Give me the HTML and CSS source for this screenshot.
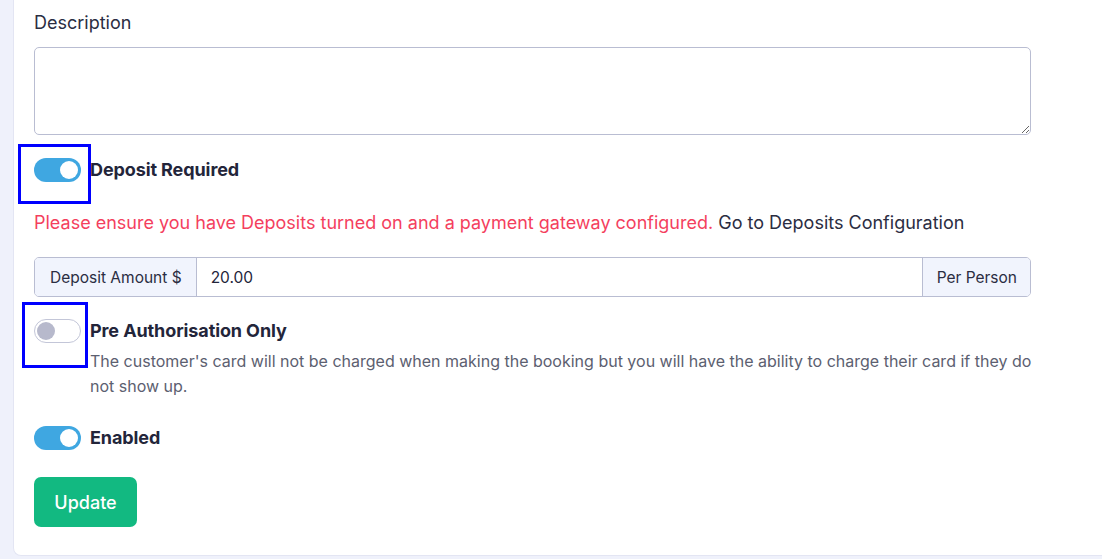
FILE: index.html
```html
<!DOCTYPE html>
<html>
<head>
<meta charset="utf-8">
<link rel="stylesheet" href="styles.css">
</head>
<body>
<div class="page">
  <div class="card">
    <label class="field-label">Description</label>
    <textarea class="textarea"></textarea>

    <div class="switch-row first">
      <span class="switch on"><span class="knob"></span></span>
      <span class="switch-label">Deposit Required</span>
      <span class="focus-box fb1"></span>
    </div>

    <p class="warning"><span class="red">Please ensure you have Deposits turned on and a payment gateway configured.</span> <a class="link">Go to Deposits Configuration</a></p>

    <div class="input-group">
      <span class="addon left">Deposit Amount $</span>
      <span class="input">20.00</span>
      <span class="addon right">Per Person</span>
    </div>

    <div class="switch-row second">
      <span class="switch off"><span class="knob"></span></span>
      <div class="switch-text">
        <span class="switch-label">Pre Authorisation Only</span>
        <p class="help">The customer's card will not be charged when making the booking but you will have the ability to charge their card if they do not show up.</p>
      </div>
      <span class="focus-box fb2"></span>
    </div>

    <div class="switch-row third">
      <span class="switch on"><span class="knob"></span></span>
      <span class="switch-label">Enabled</span>
    </div>

    <button class="btn">Update</button>
  </div>
</div>
</body>
</html>
```

FILE: styles.css
```css
* { box-sizing: border-box; }
html, body { margin: 0; padding: 0; }
body {
  background: #eff1fb;
  font-family: Inter, "Noto Sans", sans-serif;
  color: #23253a;
  width: 1102px;
  height: 559px;
  overflow: hidden;
}
.page {
  padding-left: 13px;
}
.card {
  background: #fff;
  border-left: 1px solid #e3e5f3;
  border-bottom: 1px solid #e3e5f3;
  border-bottom-left-radius: 8px;
  height: 556px;
  padding: 12px 71px 0 20px;
}
.field-label {
  display: block;
  font-size: 18px;
  line-height: 22px;
  color: #2b2d42;
}
.textarea {
  display: block;
  width: 997px;
  height: 88px;
  margin-top: 13px;
  border: 1px solid #b9bdd2;
  border-radius: 5px;
  resize: vertical;
  font: inherit;
}
.switch-row {
  position: relative;
  display: flex;
  align-items: flex-start;
}
.switch-row.first { margin-top: 23px; }
.switch-row.second { margin-top: 22px; }
.switch-row.third { margin-top: 27px; }
.switch {
  position: relative;
  flex: none;
  width: 47px;
  height: 24px;
  border-radius: 12px;
  margin-right: 9px;
}
.switch.on { background: #3fa7e1; }
.switch.off { background: #fff; border: 1px solid #c3c6d8; }
.knob {
  position: absolute;
  top: 3px;
  width: 18px;
  height: 18px;
  border-radius: 50%;
}
.switch.on .knob { right: 3px; background: #fff; }
.switch.off .knob { left: 2px; top: 2px; background: #b7b9cc; }
.switch-label {
  font-size: 18px;
  font-weight: 700;
  letter-spacing: -0.1px;
  line-height: 24px;
  color: #23253a;
}
.switch-text { display: flex; flex-direction: column; }
.help {
  margin: 6px 0 0;
  font-size: 16px;
  line-height: 25px;
  color: #5c6070;
  width: 950px;
}
.focus-box {
  position: absolute;
  border: 3px solid #0000ff;
  pointer-events: none;
}
.fb1 { left: -16px; top: -14px; width: 73px; height: 60px; }
.fb2 { left: -12px; top: -17px; width: 66px; height: 66px; }
.warning {
  margin: 29px 0 0;
  font-size: 18px;
  line-height: 24px;
}
.red { color: #f43f5e; }
.link { color: #2b2d42; }
.input-group {
  display: flex;
  width: 997px;
  height: 40px;
  margin-top: 22px;
  border: 1px solid #b9bdd2;
  border-radius: 5px;
  overflow: hidden;
  font-size: 15.5px;
}
.addon {
  display: flex;
  align-items: center;
  background: #f1f4fd;
  color: #2b2d42;
  padding: 0 14px;
}
.addon.left { border-right: 1px solid #b9bdd2; padding-left: 15px; }
.addon.right { border-left: 1px solid #b9bdd2; padding: 0 13px 0 14px; }
.input {
  flex: 1;
  display: flex;
  align-items: center;
  padding: 0 14px;
  color: #23253a;
}
.btn {
  display: block;
  margin-top: 27px;
  width: 103px;
  height: 50px;
  background: #12b981;
  color: #fff;
  border: none;
  border-radius: 7px;
  font-family: inherit;
  font-size: 18px;
  font-weight: 500;
}
```
